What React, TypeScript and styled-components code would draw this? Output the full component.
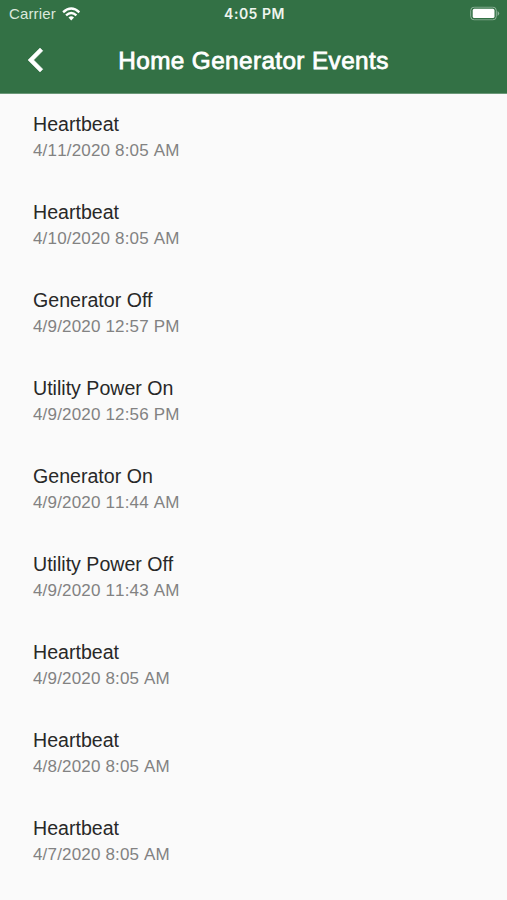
import React from "react";
import styled, { createGlobalStyle } from "styled-components";

const Global = createGlobalStyle`
  * { box-sizing: border-box; }
  body { margin: 0; background: #fafafa; font-family: "Liberation Sans", Arial, sans-serif; }
`;
const Screen = styled.div`
  width: 507px; height: 900px; overflow: hidden; background: #fafafa;
`;
const Header = styled.header`
  height: 94px; background: #337145; color: #fff; border-bottom: 1px solid #6b9878;
`;
const StatusBar = styled.div`
  height: 27px; display: grid; grid-template-columns: 1fr auto 1fr; align-items: center; padding: 0 7px 0 9px;
`;
const Carrier = styled.div`
  display: flex; align-items: center; gap: 6px; font-size: 15px; line-height: 27px; color: #dbe8dc; letter-spacing: .15px;
`;
const Clock = styled.div`
  font: 600 14px/27px Inter, sans-serif; letter-spacing: .5px; color: #eef5ee;
`;
const Power = styled.div`
  display: flex; justify-content: flex-end; transform: translateY(-.5px);
`;
const TitleBar = styled.div`
  height: 66px; display: grid; grid-template-columns: 60px 1fr 60px; align-items: center;
`;
const Back = styled.button`
  border: 0; padding: 0 0 0 12px; background: none; color: inherit; display: flex;
`;
const Title = styled.h1`
  margin: 2px 0 0; text-align: center; font-size: 24.3px; line-height: 64px; font-weight: 400; white-space: nowrap;
  -webkit-text-stroke: .8px #fff; letter-spacing: .4px;
`;
const Events = styled.ul`
  list-style: none; margin: 0; padding: 0 33px;
`;
const Event = styled.li`
  height: 88px; padding-top: 17px;
`;
const Name = styled.div`
  font-size: 19.6px; line-height: 27px; color: #282828;
`;
const Time = styled.div`
  font-size: 17px; line-height: 26px; color: #828282; letter-spacing: .17px; font-kerning: none;
`;

const events = [
  ["Heartbeat", "4/11/2020 8:05 AM"],
  ["Heartbeat", "4/10/2020 8:05 AM"],
  ["Generator Off", "4/9/2020 12:57 PM"],
  ["Utility Power On", "4/9/2020 12:56 PM"],
  ["Generator On", "4/9/2020 11:44 AM"],
  ["Utility Power Off", "4/9/2020 11:43 AM"],
  ["Heartbeat", "4/9/2020 8:05 AM"],
  ["Heartbeat", "4/8/2020 8:05 AM"],
  ["Heartbeat", "4/7/2020 8:05 AM"],
];

export default function App() {
  return (
    <Screen>
      <Global />
      <Header>
        <StatusBar>
          <Carrier>
            Carrier
            <svg width="18.5" height="14" viewBox="0 0 20 15" fill="none" stroke="#fff" strokeWidth="2.6">
              <path d="M1.2 5.6Q10-2.4 18.8 5.6M4.4 8.9Q10 3.9 15.6 8.9" />
              <path d="M7 11.3Q10 8.8 13 11.3L10 14.4Z" fill="#fff" stroke="none" />
            </svg>
          </Carrier>
          <Clock>4:05 PM</Clock>
          <Power>
            <svg width="30" height="14" viewBox="0 0 30 14">
              <rect x=".7" y=".6" width="25.6" height="12.8" rx="3.5" fill="none" stroke="#8db399" />
              <rect x="2.7" y="2.3" width="21.8" height="9.2" rx="1.6" fill="#fff" />
              <path d="M27.6 4.6q3.2 2.4 0 4.8z" fill="#8db399" />
            </svg>
          </Power>
        </StatusBar>
        <TitleBar>
          <Back aria-label="Back">
            <svg width="48" height="48" viewBox="0 0 24 24" fill="#fff" stroke="#fff" strokeWidth=".25">
              <path d="M15.41 7.41L14 6l-6 6 6 6 1.41-1.41L10.83 12z" />
            </svg>
          </Back>
          <Title>Home Generator Events</Title>
        </TitleBar>
      </Header>
      <Events>
        {events.map(([name, time]) => (
          <Event key={time}>
            <Name>{name}</Name>
            <Time>{time}</Time>
          </Event>
        ))}
      </Events>
    </Screen>
  );
}
